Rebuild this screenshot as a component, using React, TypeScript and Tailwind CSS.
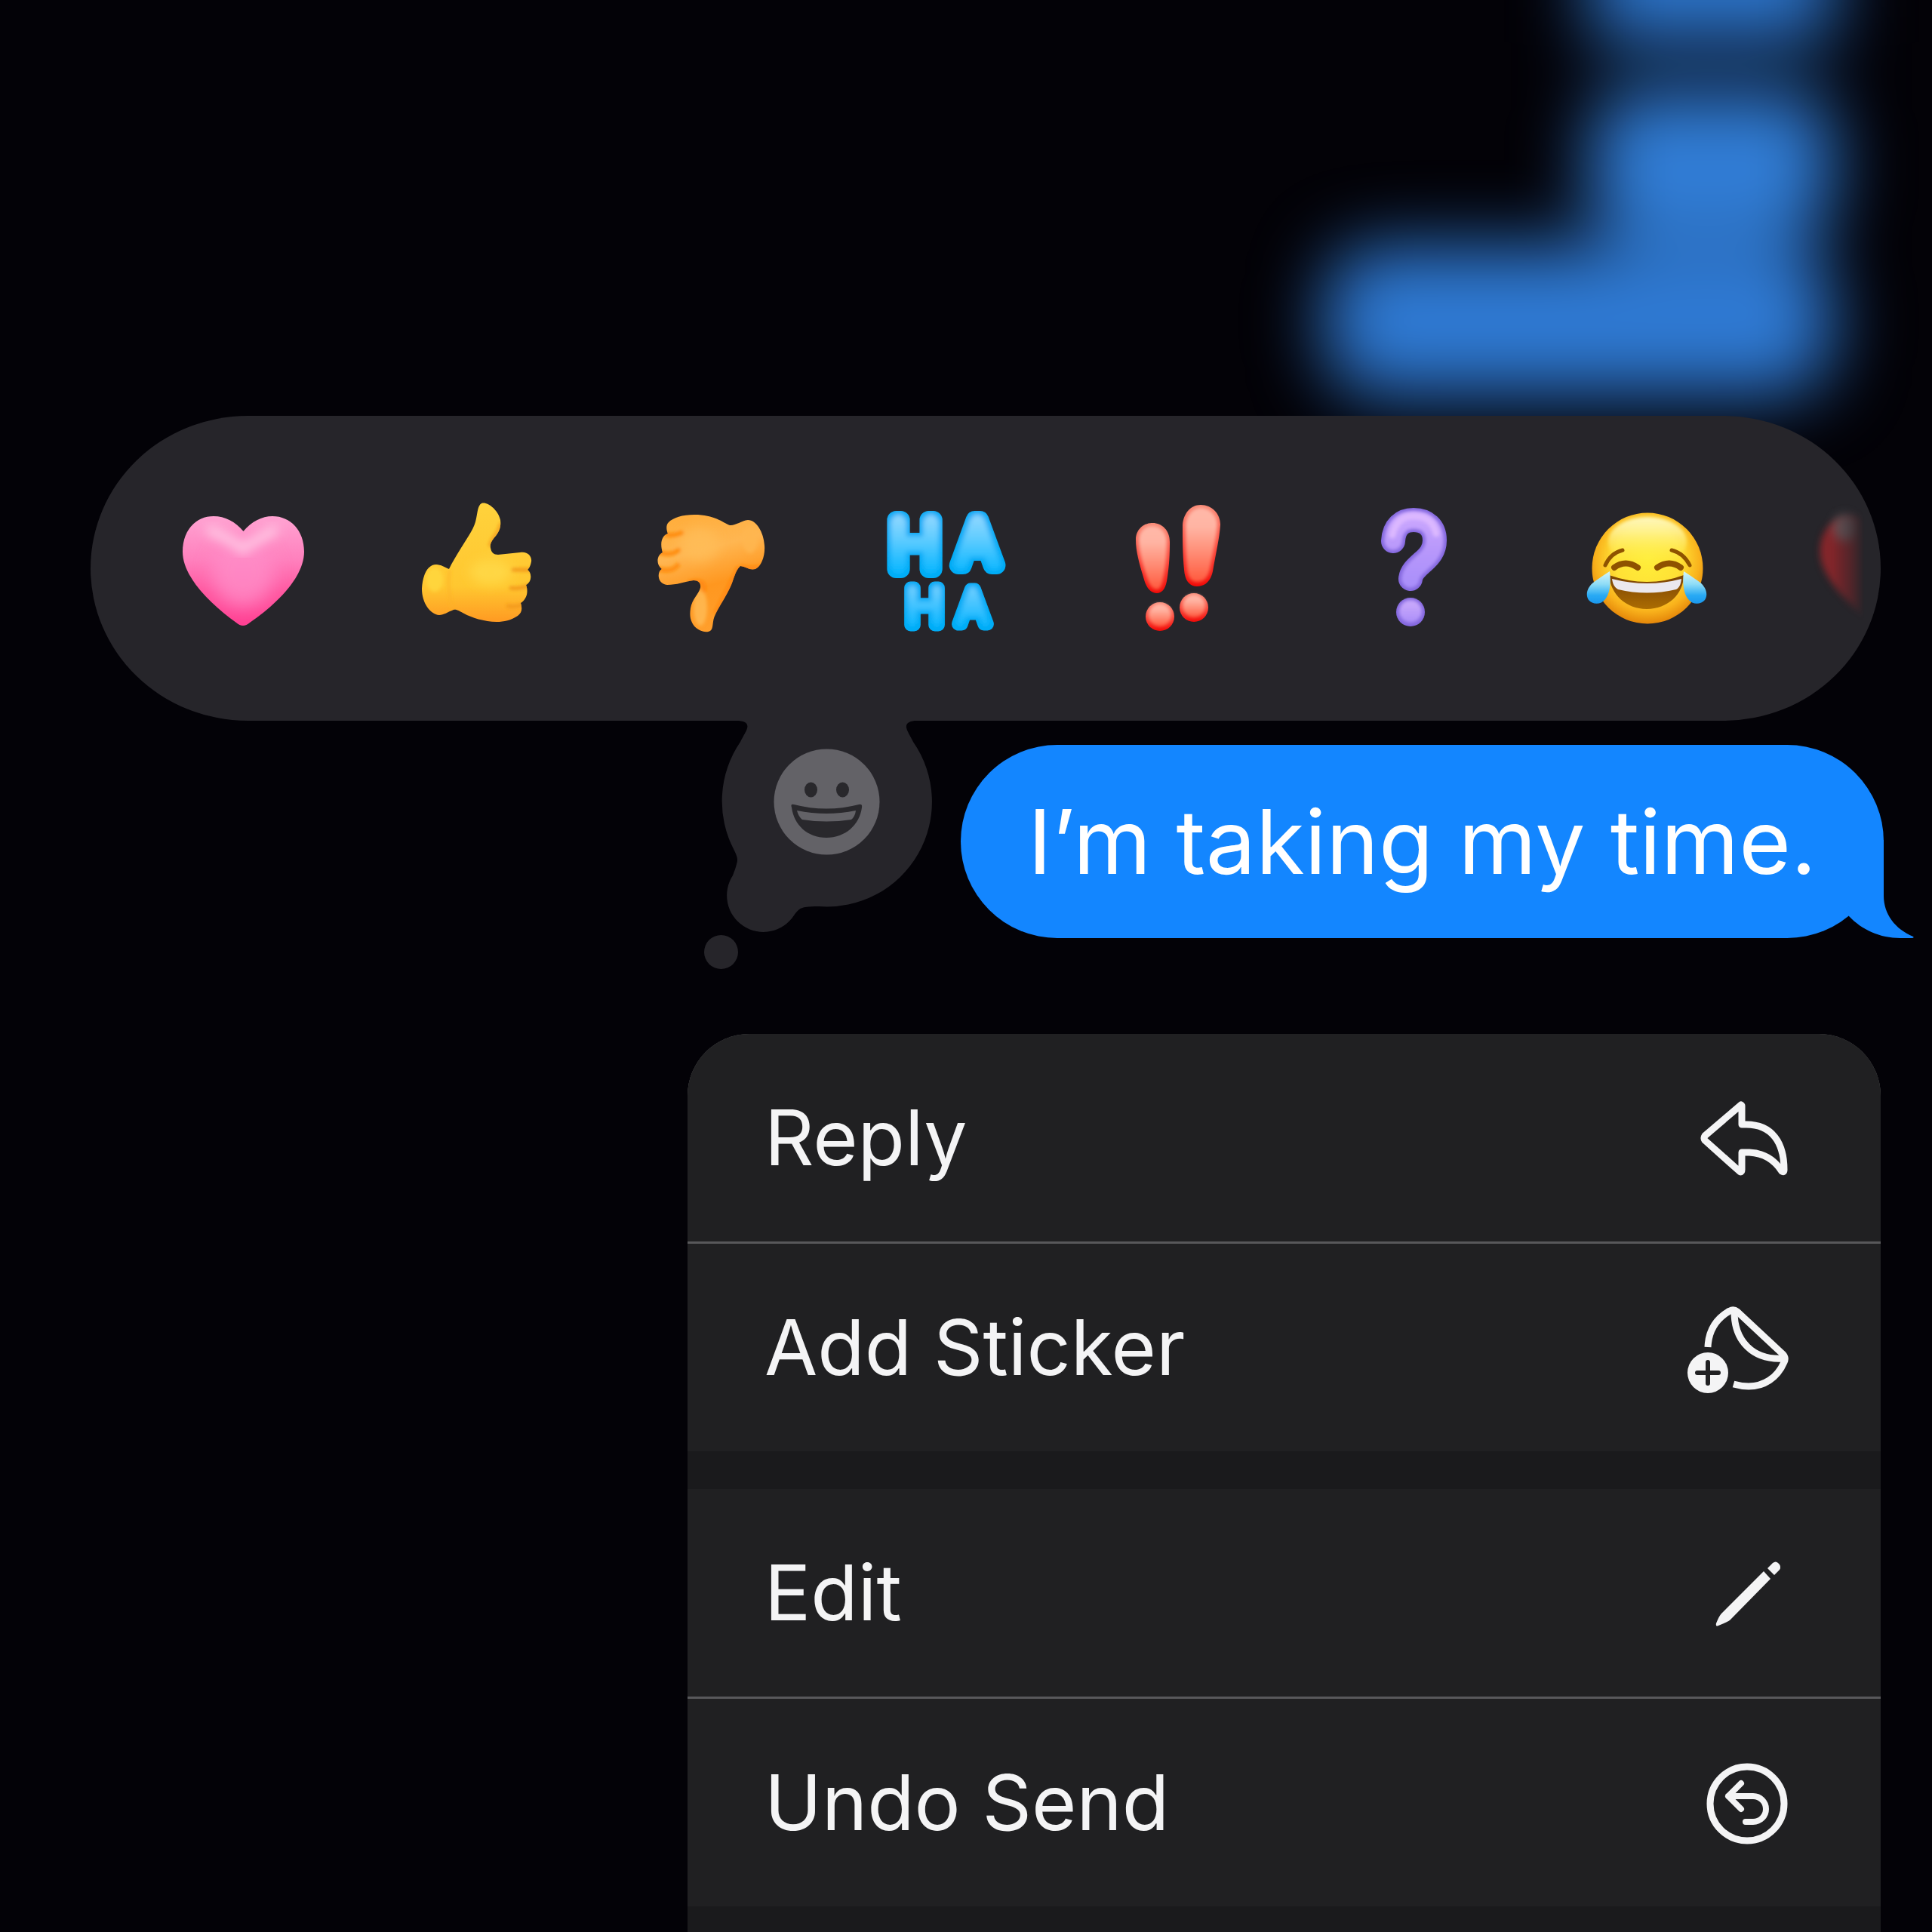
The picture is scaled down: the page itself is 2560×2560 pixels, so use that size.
import type { ReactNode } from "react";

function Emoji({ children }: { children: ReactNode }) {
  return (
    <svg viewBox="0 0 200 200" className="size-[200px]" aria-hidden="true">
      {children}
    </svg>
  );
}

const HEART =
  "M100.5 51C90 38 76 31 61 31C37 31 20 50 20 78C20 112 58 148 91 172Q100 180 109 172C144 148 181 112 181 78C181 50 163 31 139 31C125 31 111 38 100.5 51Z";

function PinkHeart() {
  return (
    <Emoji>
      <defs>
        <linearGradient id="pink-base" x1="0" y1="0" x2="0" y2="1">
          <stop offset="0" stopColor="#ffa3d2" />
          <stop offset="0.4" stopColor="#ff80bd" />
          <stop offset="0.7" stopColor="#ff569f" />
          <stop offset="1" stopColor="#ff3f92" />
        </linearGradient>
        <filter id="soft6" x="-50%" y="-50%" width="200%" height="200%">
          <feGaussianBlur stdDeviation="7" />
        </filter>
        <filter id="soft12" x="-50%" y="-50%" width="200%" height="200%">
          <feGaussianBlur stdDeviation="12" />
        </filter>
        <clipPath id="pink-clip">
          <path d={HEART} />
        </clipPath>
      </defs>
      <path d={HEART} fill="url(#pink-base)" />
      <g clipPath="url(#pink-clip)">
        <ellipse cx="100" cy="105" rx="42" ry="46" fill="#ff8dc8" opacity="0.8" filter="url(#soft12)" />
        <path
          d="M58 50Q80 60 100 74Q122 60 140 50"
          fill="none"
          stroke="#ffbfe0"
          strokeWidth="15"
          strokeLinecap="round"
          filter="url(#soft6)"
        />
      </g>
    </Emoji>
  );
}

const THUMB_UP =
  "M106 14C113 11 128 22 131 36C132 45 130 50 125 57C119 64 117 68 118 73C119 79 122 82 128 82L157 79C167 77 173 84 172 91C171 97 169 100 167 102C173 106 173 118 165 122C168 130 167 140 158 146C160 154 160 158 154 163C145 169 136 171 126 171C110 171 92 165 83 160C77 157 73 154 69 155C61 158 56 162 50 162C38 161 27 146 27 127C28 108 35 95 46 95C52 95 58 99 63 101C67 92 73 83 79 73C89 57 97 46 99 34C101 25 101 17 106 14Z";

function ThumbUp() {
  return (
    <Emoji>
      <defs>
        <linearGradient id="up-base" x1="0" y1="0" x2="0" y2="1">
          <stop offset="0" stopColor="#ffd23c" />
          <stop offset="0.7" stopColor="#ffc730" />
          <stop offset="1" stopColor="#ff9a22" />
        </linearGradient>
        <clipPath id="up-clip">
          <path d={THUMB_UP} />
        </clipPath>
        <filter id="soft2" x="-50%" y="-50%" width="200%" height="200%">
          <feGaussianBlur stdDeviation="2" />
        </filter>
      </defs>
      <path d={THUMB_UP} fill="url(#up-base)" />
      <g clipPath="url(#up-clip)" filter="url(#soft2)">
        <ellipse cx="118" cy="105" rx="28" ry="17" fill="#ffda48" opacity="0.8" filter="url(#soft6)" />
        <ellipse cx="44" cy="115" rx="11" ry="16" fill="#ffd840" opacity="0.8" />
        <path
          d="M170 102H148M168 123Q156 128 145 126M162 148Q152 152 141 150"
          fill="none"
          stroke="#f39a1c"
          strokeWidth="5"
          strokeLinecap="round"
        />
        <path d="M131 40C132 50 117 62 117 71" fill="none" stroke="#f59f1c" strokeWidth="4" />
        <path d="M64 102Q60 125 67 153" fill="none" stroke="#fbb024" strokeWidth="4" opacity="0.6" />
      </g>
    </Emoji>
  );
}

const THUMB_DOWN =
  "M78 29C62 29 50 33 44 39C40 43 41 49 43 54C35 57 32 66 36 79C28 83 27 95 35 101C28 105 29 121 42 122C55 122 64 118 77 116C84 116 87 120 86 126C84 134 75 141 73 153C72 160 72 166 75 172C79 181 92 187 99 183C104 180 101 170 106 161C112 148 120 138 127 122C131 112 133 102 139 97C147 98 151 103 159 101C167 97 172 84 171 70C170 52 160 36 149 36C140 37 132 44 125 43C115 39 105 29 78 29Z";

function ThumbDown() {
  return (
    <Emoji>
      <defs>
        <linearGradient id="down-base" x1="0.35" y1="0" x2="0.6" y2="1">
          <stop offset="0" stopColor="#ffae3d" />
          <stop offset="0.3" stopColor="#ffb651" />
          <stop offset="0.6" stopColor="#ff971f" />
          <stop offset="1" stopColor="#ffa02e" />
        </linearGradient>
        <clipPath id="down-clip">
          <path d={THUMB_DOWN} />
        </clipPath>
      </defs>
      <path d={THUMB_DOWN} fill="url(#down-base)" />
      <g clipPath="url(#down-clip)" filter="url(#soft2)">
        <ellipse cx="85" cy="68" rx="26" ry="22" fill="#ffbd58" opacity="0.8" filter="url(#soft6)" />
        <ellipse cx="86" cy="152" rx="9" ry="24" fill="#ffbd58" opacity="0.75" />
        <ellipse cx="152" cy="62" rx="10" ry="18" fill="#ffb650" opacity="0.8" />
        <path
          d="M40 55Q50 58 61 53M32 79Q48 84 57 76M30 101Q48 106 56 96"
          fill="none"
          stroke="#ff8c0c"
          strokeWidth="6"
          strokeLinecap="round"
        />
        <path
          d="M70 119Q95 112 90 132M139 97Q150 102 168 98M137 98L106 160"
          fill="none"
          stroke="#ff860a"
          strokeWidth="6"
          opacity="0.8"
        />
      </g>
    </Emoji>
  );
}

function HaHa() {
  return (
    <Emoji>
      <defs>
        <linearGradient id="ha-1" gradientUnits="userSpaceOnUse" x1="0" y1="22" x2="0" y2="112">
          <stop offset="0" stopColor="#a4dcff" />
          <stop offset="0.45" stopColor="#66ceff" />
          <stop offset="1" stopColor="#06b6ff" />
        </linearGradient>
        <linearGradient id="ha-2" gradientUnits="userSpaceOnUse" x1="0" y1="115" x2="0" y2="184">
          <stop offset="0" stopColor="#8cd8ff" />
          <stop offset="0.5" stopColor="#4cc6ff" />
          <stop offset="1" stopColor="#06b6ff" />
        </linearGradient>
        <filter id="puffy" x="-20%" y="-20%" width="140%" height="140%">
          <feFlood floodColor="#0cacf6" />
          <feComposite in2="SourceAlpha" operator="in" result="edge" />
          <feMorphology in="SourceGraphic" operator="erode" radius="5" />
          <feGaussianBlur stdDeviation="3" result="core" />
          <feMerge>
            <feMergeNode in="edge" />
            <feMergeNode in="core" />
          </feMerge>
        </filter>
      </defs>
      <g
        className="font-['Inter']"
        fontWeight="300"
        strokeLinejoin="round"
        strokeLinecap="round"
        textAnchor="middle"
        filter="url(#puffy)"
      >
        <g stroke="url(#ha-1)" strokeWidth="24" fill="url(#ha-1)">
          <text x="60" y="101" fontSize="90">H</text>
          <text x="143" y="96" fontSize="82">A</text>
        </g>
        <g stroke="url(#ha-2)" strokeWidth="17" fill="url(#ha-2)">
          <text x="73" y="175" fontSize="67">H</text>
          <text x="137" y="174" fontSize="63">A</text>
        </g>
      </g>
    </Emoji>
  );
}

const BANG_LEFT = "M65 40C78 40 88 50 88 65C88 85 87 100 84 117C82 128 77 133 71 133C63 133 57 126 54 115C48 95 43 78 43 62C43 49 53 40 65 40Z";
const BANG_RIGHT = "M129 16C144 16 155 28 155 42C154 60 149 80 145 104C142 118 134 124 124 124C114 124 108 116 107 102C105 80 105 60 105 43C106 27 116 16 129 16Z";

function DoubleBang() {
  return (
    <Emoji>
      <defs>
        <linearGradient id="bang-fill" x1="0" y1="0" x2="0" y2="1">
          <stop offset="0" stopColor="#ffb8a8" />
          <stop offset="0.25" stopColor="#ffb5a4" />
          <stop offset="0.6" stopColor="#ff8d76" />
          <stop offset="1" stopColor="#ff5a3e" />
        </linearGradient>
        <linearGradient id="bang-edge" x1="0" y1="0" x2="0" y2="1">
          <stop offset="0" stopColor="#f88a76" />
          <stop offset="0.5" stopColor="#fb4a3e" />
          <stop offset="1" stopColor="#f00a08" />
        </linearGradient>
        <filter id="soft1" x="-20%" y="-20%" width="140%" height="140%">
          <feGaussianBlur stdDeviation="2" />
        </filter>
      </defs>
      <g fill="url(#bang-edge)">
        <path d={BANG_LEFT} />
        <path d={BANG_RIGHT} />
        <circle cx="75" cy="164" r="19" />
        <circle cx="120" cy="152" r="19" />
      </g>
      <g fill="url(#bang-fill)" filter="url(#soft1)">
        <path d="M65 44C76 44 84 53 84 65C84 85 82 100 79 115C77 124 75 128 71 128C65 128 61 122 58 113C52 95 47 78 47 62C47 51 55 44 65 44Z" />
        <path d="M129 20C141 20 151 30 151 42C150 60 145 80 141 102C138 114 132 118 124 118C116 118 112 112 111 100C109 80 109 60 109 43C110 29 119 20 129 20Z" />
        <circle cx="75" cy="162" r="15" />
        <circle cx="120" cy="150" r="15" />
      </g>
    </Emoji>
  );
}

const HOOK = "M74 64C75 45 86 36 101 36C118 36 129 46 129 63C129 76 122 84 114 91C104 100 98 105 97 114";

function Question() {
  return (
    <Emoji>
      <defs>
        <linearGradient id="q-fill" gradientUnits="userSpaceOnUse" x1="0" y1="20" x2="0" y2="178">
          <stop offset="0" stopColor="#cfabff" />
          <stop offset="0.35" stopColor="#b898fb" />
          <stop offset="0.66" stopColor="#a98ffa" />
          <stop offset="0.8" stopColor="#c8a8fb" />
          <stop offset="1" stopColor="#a488f8" />
        </linearGradient>
      </defs>
      <path d={HOOK} fill="none" stroke="#8468de" strokeWidth="32" strokeLinecap="round" />
      <path
        d={HOOK}
        fill="none"
        stroke="url(#q-fill)"
        strokeWidth="24"
        strokeLinecap="round"
        filter="url(#soft2)"
      />
      <path
        d="M73 56C77 38 88 31 101 31C117 31 127 38 131 54"
        fill="none"
        stroke="#dcb8ff"
        strokeWidth="9"
        strokeLinecap="round"
        filter="url(#soft2)"
      />
      <circle cx="97" cy="158" r="19" fill="#8468de" />
      <circle cx="97" cy="157" r="15" fill="url(#q-fill)" filter="url(#soft1)" />
    </Emoji>
  );
}

function TearsOfJoy() {
  return (
    <Emoji>
      <defs>
        <radialGradient id="joy-face" cx="0.5" cy="0.42" r="0.6">
          <stop offset="0" stopColor="#ffee3a" />
          <stop offset="0.5" stopColor="#ffe035" />
          <stop offset="0.78" stopColor="#f9b21c" />
          <stop offset="1" stopColor="#e07e06" />
        </radialGradient>
        <linearGradient id="joy-shine" x1="0" y1="0" x2="0" y2="1">
          <stop offset="0" stopColor="#fff8c0" />
          <stop offset="0.3" stopColor="#fff6a0" stopOpacity="0.8" />
          <stop offset="1" stopColor="#ffee3a" stopOpacity="0" />
        </linearGradient>
        <linearGradient id="joy-tear" x1="0" y1="0" x2="0" y2="1">
          <stop offset="0" stopColor="#d6f6fb" />
          <stop offset="0.4" stopColor="#8edcf6" />
          <stop offset="0.75" stopColor="#28aaf4" />
          <stop offset="1" stopColor="#1a98ee" />
        </linearGradient>
        <linearGradient id="joy-mouth" x1="0" y1="0" x2="0" y2="1">
          <stop offset="0" stopColor="#7a4204" />
          <stop offset="1" stopColor="#ab6c02" />
        </linearGradient>
      </defs>
      <circle cx="101" cy="100" r="73.5" fill="url(#joy-face)" />
      <ellipse cx="101" cy="65" rx="52" ry="33" fill="url(#joy-shine)" filter="url(#soft2)" />
      <path d="M50 109Q101 127 149 109C149 134 128 154 100 154C72 154 52 134 50 109Z" fill="url(#joy-mouth)" />
      <path d="M54 114Q101 126 146 114C145 122 143 126 139 128Q100 137 62 128C57 125 55 121 54 114Z" fill="#ebe8ee" />
      <g fill="none" stroke="#8f5200" strokeLinecap="round">
        <path d="M45 96Q52 80 68 76M157 96Q149 80 133 76" strokeWidth="5" />
        <path d="M57 99Q72 88 88 99M114 99Q130 88 145 99" strokeWidth="8" />
      </g>
      <g fill="url(#joy-tear)">
        <path d="M51 104C53 120 51 134 45 141C39 149 28 148 23 142C18 134 22 125 29 119C37 113 45 108 51 104Z" />
        <path d="M149 104C147 120 149 134 155 141C161 149 172 148 177 142C182 134 178 125 171 119C163 113 155 108 149 104Z" />
      </g>
    </Emoji>
  );
}

function FadingHeart() {
  return (
    <Emoji>
      <defs>
        <linearGradient id="fade-x" gradientUnits="userSpaceOnUse" x1="10" y1="0" x2="78" y2="0">
          <stop offset="0" stopColor="#fff" stopOpacity="0.6" />
          <stop offset="0.4" stopColor="#fff" stopOpacity="0.5" />
          <stop offset="0.75" stopColor="#fff" stopOpacity="0.24" />
          <stop offset="1" stopColor="#fff" stopOpacity="0" />
        </linearGradient>
        <mask id="fade-mask">
          <rect width="200" height="200" fill="url(#fade-x)" />
        </mask>
        <filter id="soft4" x="-50%" y="-50%" width="200%" height="200%">
          <feGaussianBlur stdDeviation="5" />
        </filter>
      </defs>
      <g mask="url(#fade-mask)">
        <path d={HEART} fill="#d8262a" filter="url(#soft4)" />
        <ellipse cx="54" cy="46" rx="16" ry="18" fill="#a8a0a0" opacity="0.8" filter="url(#soft6)" />
      </g>
    </Emoji>
  );
}

const reactions: { label: string; art: ReactNode }[] = [
  { label: "Heart", art: <PinkHeart /> },
  { label: "Thumbs up", art: <ThumbUp /> },
  { label: "Thumbs down", art: <ThumbDown /> },
  { label: "Ha ha", art: <HaHa /> },
  { label: "Emphasize", art: <DoubleBang /> },
  { label: "Question", art: <Question /> },
  { label: "Tears of joy", art: <TearsOfJoy /> },
  { label: "Red heart", art: <FadingHeart /> },
];

function EmojiPickerBubble() {
  return (
    <svg viewBox="0 0 320 335" className="block h-[335px] w-[320px] overflow-visible" aria-hidden="true">
      <path
        d="M48 -2V0C58 0 64 3 62 10C61 14 57 20 53 28A139 139 0 0 0 45 172C49 180 50 184 48 190C47 195 45 199 43 205A48 48 0 0 0 124 258C129 251 132 248 139 247C145 246 150 246 157 246A139 139 0 0 0 282 28C278 20 274 14 273 9C272 3 278 0 287 0V-2Z"
        fill="#26252a"
      />
      <circle cx="27.500" cy="306.500" r="22.500" fill="#26252a" />
      <circle cx="167.500" cy="107.500" r="70" fill="#636267" />
      <ellipse cx="146.500" cy="91.500" rx="8.500" ry="10" fill="#29282c" />
      <ellipse cx="188.500" cy="91.500" rx="8.500" ry="10" fill="#29282c" />
      <path
        d="M121 115Q119 110 124 111Q167 122 210 111Q215 110 214 115C211 138 192 155 167 155C142 155 124 138 121 115Z"
        fill="#29282c"
      />
      <path d="M128 119Q167 127 206 119Q205 127 200 131Q167 136 135 131Q130 127 128 119Z" fill="#636267" />
    </svg>
  );
}

function MenuIcon({ children }: { children: ReactNode }) {
  return (
    <svg
      viewBox="0 0 140 140"
      className="size-[140px] shrink-0"
      fill="none"
      stroke="#f4f4f5"
      strokeWidth="9"
      strokeLinecap="round"
      strokeLinejoin="round"
      aria-hidden="true"
    >
      {children}
    </svg>
  );
}

function ReplyIcon() {
  return (
    <MenuIcon>
      <path d="M77 26L29 67Q27 70 29 73L76 115Q78 115 78 112V89H88C108 90 122 100 131 114Q134 116 134 112C134 76 118 52 84 52H78V27Z" />
    </MenuIcon>
  );
}

function StickerIcon() {
  return (
    <MenuIcon>
      <path d="M33 69C34 45 46 30 62 21Q67 18 72 22L132 78Q137 83 134 89C125 110 107 121 87 121C80 121 74 120 67 118" strokeLinecap="butt" />
      <path d="M68 22C68 60 92 87 134 84" />
      <circle cx="33" cy="103" r="27" fill="#f4f4f5" stroke="none" />
      <path d="M33 89V117M19 103H47" stroke="#202022" strokeWidth="6" />
    </MenuIcon>
  );
}

function PencilIcon() {
  return (
    <MenuIcon>
      <g fill="#f4f4f5" stroke="none">
        <path d="M107 41L116 51L63 105Q60 108 47 113Q43 115 44 110Q48 100 51 97Z" />
        <path d="M112 37L119 30Q123 27 126 30Q131 34 128 39L121 46Z" />
      </g>
    </MenuIcon>
  );
}

function UndoIcon() {
  return (
    <MenuIcon>
      <circle cx="85" cy="71" r="49" />
      <path d="M77 44L60 61L77 78M60 61H93A17 17 0 0 1 93 95H83" strokeWidth="8" />
    </MenuIcon>
  );
}

function MenuItem({ label, icon }: { label: string; icon: ReactNode }) {
  return (
    <button
      type="button"
      className="flex h-[275px] w-full items-center justify-between bg-[#202022] pr-[122px] pl-[102px] text-left text-[102px] text-[#f4f4f5]"
    >
      <span>{label}</span>
      {icon}
    </button>
  );
}

export default function App() {
  return (
    <main className="relative flex h-screen flex-col overflow-hidden bg-[#030207] font-['Inter','Liberation_Sans',sans-serif]">
      <div className="flex h-[551px] shrink-0 flex-col items-end pr-[132px] blur-[48px]" aria-hidden="true">
        <div className="-mt-24 h-[151px] w-80 shrink-0 bg-[#2e78d0]" />
        <div className="mt-16 h-[200px] w-80 shrink-0 rounded-[60px] bg-[#317dd6]" />
        <div className="mt-2 h-[196px] w-[672px] shrink-0 rounded-[70px] bg-[#2f7ad4]" />
      </div>

      <div className="relative mr-[68px] ml-[120px] flex h-[404px] shrink-0 items-center overflow-hidden rounded-[208px/202px] bg-[#26252a] pl-[47px]">
        {reactions.map((r) => (
          <button key={r.label} type="button" aria-label={r.label} className="flex w-[310px] shrink-0 justify-center">
            {r.art}
          </button>
        ))}
      </div>

      <div className="relative mr-16 flex shrink-0 items-start justify-end gap-[25px]">
        <button type="button" aria-label="More reactions" className="shrink-0">
          <EmojiPickerBubble />
        </button>
        <div className="relative mt-8 flex h-64 items-center rounded-full bg-[#1386ff] px-[89px]">
          <p className="text-[118px] whitespace-nowrap text-white">I’m taking my time.</p>
          <svg viewBox="0 0 90 130" className="absolute -right-10 bottom-0 h-[130px] w-[90px]" aria-hidden="true">
            <path d="M0 0H50V74C50 98 65 118 89 128Q91 130 87 130H72C45 130 21 119 4 101L0 95Z" fill="#1386ff" />
          </svg>
        </div>
      </div>

      <div className="relative mt-20 mr-[68px] flex w-[1581px] max-w-[92%] flex-1 flex-col self-end overflow-hidden rounded-t-[82px] bg-[#1a1a1c]">
        <div className="flex flex-col gap-[3px] bg-[#58585b]">
          <MenuItem label="Reply" icon={<ReplyIcon />} />
          <MenuItem label="Add Sticker" icon={<StickerIcon />} />
        </div>
        <div className="mt-[50px] flex flex-col gap-[3px] bg-[#58585b]">
          <MenuItem label="Edit" icon={<PencilIcon />} />
          <MenuItem label="Undo Send" icon={<UndoIcon />} />
        </div>
      </div>
    </main>
  );
}
